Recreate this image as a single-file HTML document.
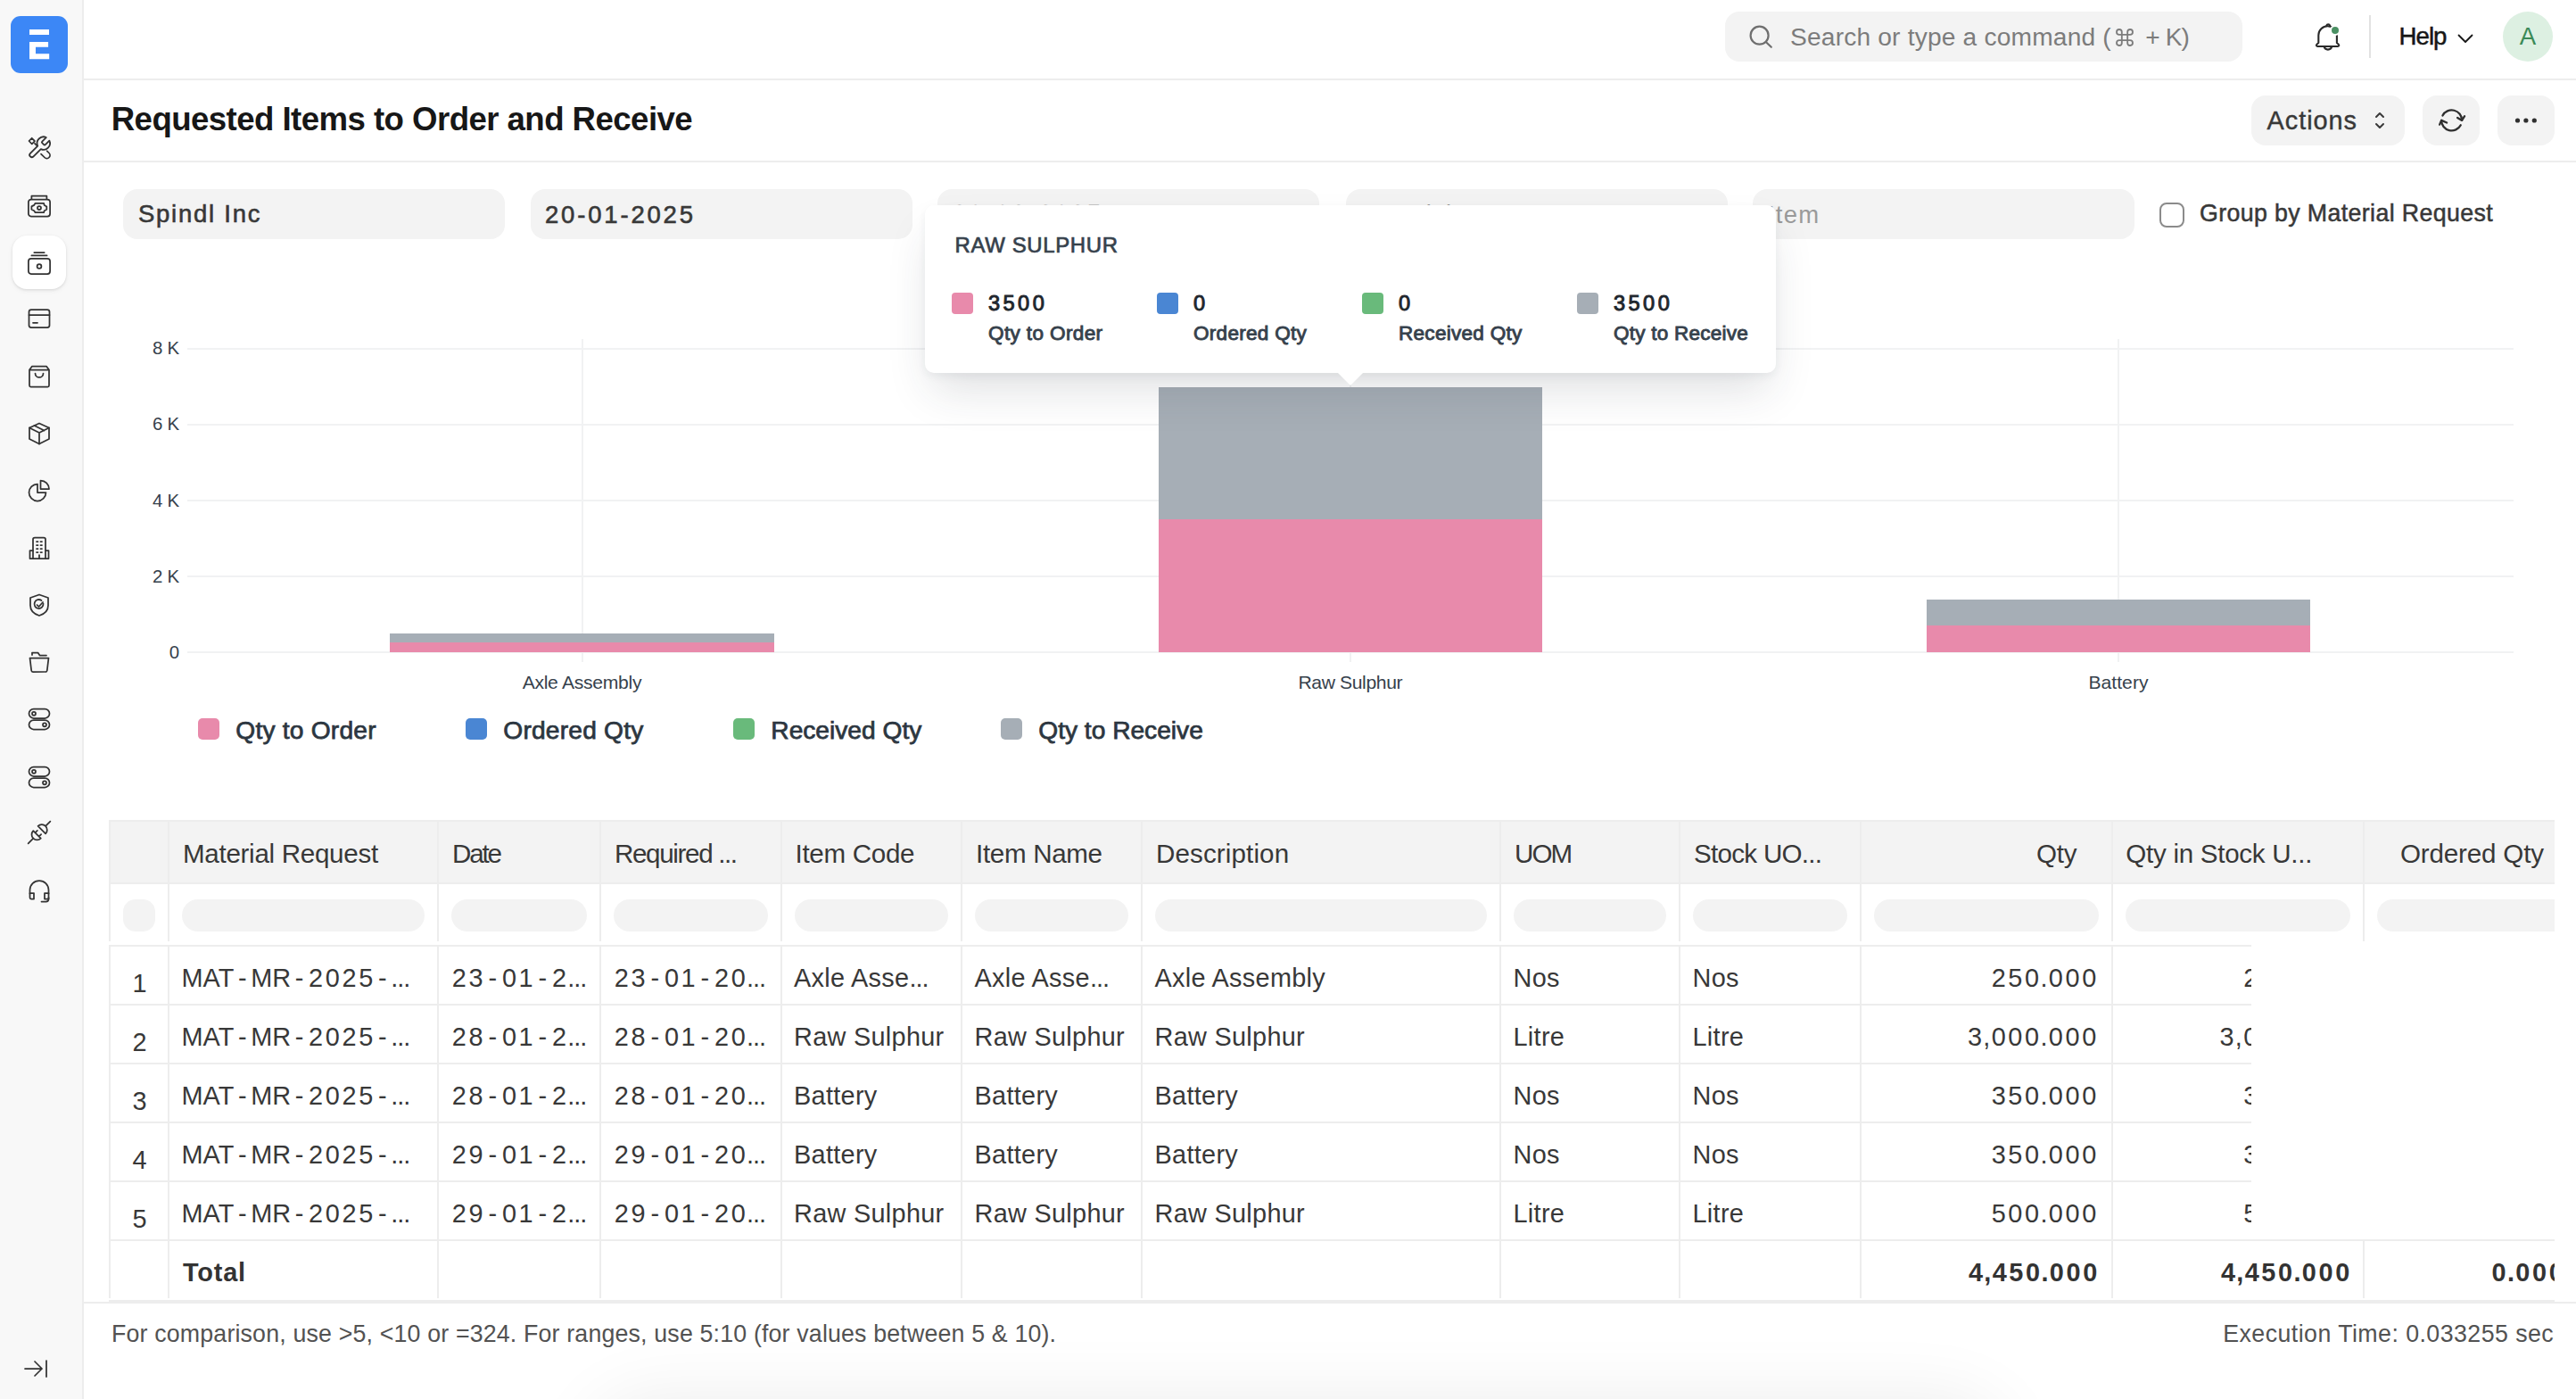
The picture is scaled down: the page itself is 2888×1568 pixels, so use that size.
<!DOCTYPE html>
<html><head><meta charset="utf-8">
<style>

*{box-sizing:border-box;margin:0;padding:0}
html,body{width:2888px;height:1568px;overflow:hidden;background:#fff}
body{position:relative;font-family:"Liberation Sans",sans-serif;color:#171717}
.a{position:absolute}
.t{position:absolute;white-space:nowrap;line-height:1}
svg{position:absolute;overflow:visible}
.ic{fill:none;stroke:#333;stroke-width:1.75;stroke-linecap:round;stroke-linejoin:round}
.bx{position:absolute;background:#f3f3f3}
.bd{position:absolute;background:#ededed}

</style></head><body>
<div class="a" style="left:700px;top:1605px;width:1510px;height:60px;border-radius:30px;box-shadow:0 0 80px 40px rgba(0,0,0,0.07)"></div>
<div class="a" style="left:0;top:0;width:92px;height:1568px;background:#f8f8f8"></div>
<div class="bd" style="left:92px;top:0;width:2px;height:1568px"></div>
<div class="a" style="left:12px;top:18px;width:64px;height:64px;border-radius:11px;background:#3c87f6"></div>
<div class="a" style="left:33px;top:33px;width:22px;height:6px;background:#fff"></div>
<svg style="left:33px;top:46.8px" width="22.2" height="19.3" viewBox="0 0 22.2 19.3"><path d="M0 0H21.1V5.7H7V13.2H22.2V19.3H0z" fill="#fff"/></svg>
<div class="a" style="left:14px;top:264px;width:60px;height:60px;border-radius:16px;background:#fff;box-shadow:0 1px 3px rgba(0,0,0,0.10),0 2px 6px rgba(0,0,0,0.05)"></div>
<svg class="ic" style="left:31px;top:153.0px" width="26" height="26" viewBox="0 0 26 26"><g transform="translate(-1.4 -2) scale(1.2)" style="stroke-width:1.5"><path d="M14.7 6.3a1 1 0 0 0 0 1.4l1.6 1.6a1 1 0 0 0 1.4 0l3.77-3.77a6 6 0 0 1-7.94 7.94l-6.91 6.91a2.12 2.12 0 0 1-3-3l6.91-6.91a6 6 0 0 1 7.94-7.94l-3.76 3.76z"/></g><path d="M1.5 5L4.7 1.8L8 5.2L4.8 8.3Z M8 7.8L10.3 10"/><path d="M21.8 16.3L24 18.5a3.5 3.5 0 0 1-5 5L15 19.6"/></svg>
<svg class="ic" style="left:31px;top:217.5px" width="26" height="26" viewBox="0 0 26 26"><rect x="0.9" y="5.6" width="24.2" height="18.9" rx="3"/><path d="M4.4 5V1.7h17V5"/><path d="M8.4 9.8h9.7l0.6 2.1 2.6 1.5v3.4l-2.6 1.4-0.6 2H8.4l-1.1-2-2.9-1.4v-3.4l2.9-1.5z"/><circle cx="13" cy="15.1" r="2"/></svg>
<svg class="ic" style="left:31px;top:281.5px" width="26" height="26" viewBox="0 0 26 26"><rect x="0.9" y="7.9" width="24.2" height="17.2" rx="3"/><path d="M7.3 1h11.4 M4.4 4.4h17.2"/><circle cx="13" cy="16.5" r="2.4"/></svg>
<svg class="ic" style="left:31px;top:344.7px" width="26" height="26" viewBox="0 0 26 26"><rect x="1.5" y="2" width="23" height="20" rx="2.5"/><path d="M1.5 8h23 M6 16.8h5"/></svg>
<svg class="ic" style="left:31px;top:408.7px" width="26" height="26" viewBox="0 0 26 26"><path d="M2 5.5L5 1.5h16l3 4V23a1.5 1.5 0 0 1-1.5 1.5h-19A1.5 1.5 0 0 1 2 23z M2 5.5h22"/><path d="M8.5 9.5a4.5 4.5 0 0 0 9 0"/></svg>
<svg class="ic" style="left:31px;top:472.7px" width="26" height="26" viewBox="0 0 26 26"><path d="M13 1.5L2 6.5v12.5l11 5.5 11-5.5V6.5z"/><path d="M2 6.5l11 5.5 11-5.5 M13 12v12.5 M7.5 4l11 5.5"/></svg>
<svg class="ic" style="left:31px;top:537.0px" width="26" height="26" viewBox="0 0 26 26"><path d="M11 5.5a9.5 9.5 0 1 0 9.5 9.5H11z"/><path d="M14.5 1.5a9.5 9.5 0 0 1 9.5 9.5h-9.5z"/></svg>
<svg class="ic" style="left:31px;top:601.0px" width="26" height="26" viewBox="0 0 26 26"><path d="M6 25V3.5A2 2 0 0 1 8 1.5h10a2 2 0 0 1 2 2V25"/><path d="M6 16H2.5v9H23.5v-9H20 M13 21v4"/><path d="M10 6h1.5 M14.5 6H16 M10 10h1.5 M14.5 10H16 M10 14h1.5 M14.5 14H16 M10 18h1.5 M14.5 18H16"/></svg>
<svg class="ic" style="left:31px;top:665.0px" width="26" height="26" viewBox="0 0 26 26"><path d="M13 1.5l10 3.5v8.5c0 6-4.5 9.8-10 11.5C7.5 23.3 3 19.5 3 13.5V5z"/><path d="M17.5 11.5a5 5 0 1 1-2-3.5"/><path d="M10.5 13l2 2 4.5-5"/></svg>
<svg class="ic" style="left:31px;top:729.0px" width="26" height="26" viewBox="0 0 26 26"><path d="M5 5V2.5h6.5l2 3h7.5"/><path d="M2.5 8.5h21l-1.7 14a1.7 1.7 0 0 1-1.7 1.5H5.9a1.7 1.7 0 0 1-1.7-1.5z"/></svg>
<svg class="ic" style="left:31px;top:793.3px" width="26" height="26" viewBox="0 0 26 26"><rect x="1.5" y="1.5" width="23" height="10.5" rx="5.25"/><rect x="1.5" y="14" width="23" height="10.5" rx="5.25"/><circle cx="7" cy="6.75" r="2"/><circle cx="19" cy="19.25" r="2"/></svg>
<svg class="ic" style="left:31px;top:857.8px" width="26" height="26" viewBox="0 0 26 26"><rect x="1.5" y="1.5" width="23" height="10.5" rx="5.25"/><rect x="1.5" y="14" width="23" height="10.5" rx="5.25"/><circle cx="7" cy="6.75" r="2"/><circle cx="19" cy="19.25" r="2"/></svg>
<svg class="ic" style="left:31px;top:920.0px" width="26" height="26" viewBox="0 0 26 26"><g transform="rotate(-45 13 13)"><path d="M-4.5 13h8"/><path d="M9.5 7a6 6 0 0 0 0 12z M9.5 10h3.5 M9.5 16h3.5"/><path d="M17 7a6 6 0 0 1 0 12z M23 13h7.5"/></g></svg>
<svg class="ic" style="left:31px;top:985.0px" width="26" height="26" viewBox="0 0 26 26"><path d="M2.5 16.5v-4a10.5 10.5 0 0 1 21 0v4"/><path d="M2.5 16h4.5v6.5H4a1.5 1.5 0 0 1-1.5-1.5z M23.5 16H19v6.5h4.5z"/><path d="M23.5 21v1.5a3 3 0 0 1-3 3h-5"/></svg>
<svg class="ic" style="left:28px;top:1525px" width="26" height="20" viewBox="0 0 26 20"><path d="M0 9h19 M11 1l8 8-8 8 M24 0v18"/></svg>
<div class="bd" style="left:94px;top:88px;width:2794px;height:2px"></div>
<div class="bx" style="left:1934px;top:13px;width:580px;height:56px;border-radius:16px"></div>
<svg class="ic" style="left:1960px;top:27px;stroke:#6f6f6f;stroke-width:2.2" width="28" height="28" viewBox="0 0 28 28"><circle cx="12.6" cy="12.7" r="10"/><path d="M20 20.2l5.8 5.6"/></svg>
<div class="t" style="top:27.15px;font-size:28.17px;font-weight:normal;color:#7c7c7c;letter-spacing:0.178px;left:2007.00px;">Search or type a command (</div>
<svg style="left:2372px;top:32px" width="20" height="20" viewBox="0 0 22 22"><path d="M7.5 7.5V4.2a3.2 3.2 0 1 0-3.2 3.3H17.7a3.2 3.2 0 1 0-3.2-3.3V17.8a3.2 3.2 0 1 0 3.2-3.3H4.3a3.2 3.2 0 1 0 3.2 3.3z" fill="none" stroke="#7c7c7c" stroke-width="2"/></svg>
<div class="t" style="top:27.15px;font-size:28.17px;font-weight:normal;color:#7c7c7c;letter-spacing:-0.907px;left:2405.30px;">+ K)</div>
<svg class="ic" style="left:2590px;top:20px;stroke:#2a2a2a;stroke-width:2.1" width="40" height="40" viewBox="0 0 40 40"><path d="M9.3 28V19.5A10.3 10.3 0 0 1 29.9 19.5V28l1.9 1.7a1.3 1.3 0 0 1-0.9 2.3H8.3a1.3 1.3 0 0 1-0.9-2.3z"/><path d="M15.6 32.3a4.4 4.2 0 0 0 8.6 0"/><path d="M18.3 8.6a2 2 0 0 1 3.8 0"/></svg>
<div class="a" style="left:2611.5px;top:27.5px;width:12.8px;height:12.8px;border-radius:7px;background:#fff"></div>
<div class="a" style="left:2614px;top:30px;width:7.8px;height:7.8px;border-radius:4px;background:#4a9063"></div>
<div class="a" style="left:2656px;top:17px;width:2px;height:48px;background:#e2e2e2"></div>
<div class="t" style="top:27.03px;font-size:27.61px;font-weight:normal;color:#171717;letter-spacing:-0.983px;left:2689.60px;-webkit-text-stroke:0.5px #171717;">Help</div>
<svg class="ic" style="left:2755px;top:37px;stroke:#171717;stroke-width:1.8" width="18" height="14" viewBox="0 0 18 14"><path d="M1.5 2.5l7.5 7.5 7.5-7.5"/></svg>
<div class="a" style="left:2806px;top:13px;width:56px;height:56px;border-radius:28px;background:#ddf0e2"></div>
<div class="t" style="top:27.03px;font-size:27.61px;font-weight:normal;color:#3b8a57;left:2834.00px;transform:translateX(-50%);">A</div>
<div class="bd" style="left:94px;top:180px;width:2794px;height:2px"></div>
<div class="t" style="top:116.00px;font-size:36.62px;font-weight:bold;color:#171717;letter-spacing:-0.554px;left:124.70px;">Requested Items to Order and Receive</div>
<div class="bx" style="left:2524px;top:107px;width:172px;height:56px;border-radius:16px"></div>
<div class="t" style="top:120.56px;font-size:28.87px;font-weight:normal;color:#383838;letter-spacing:0.960px;left:2541.60px;-webkit-text-stroke:0.4px #383838;">Actions</div>
<svg class="ic" style="left:2662px;top:125px;stroke:#383838;stroke-width:2" width="12" height="20" viewBox="0 0 12 20"><path d="M2 6l4-4 4 4 M2 14l4 4 4-4"/></svg>
<div class="bx" style="left:2716px;top:107px;width:64px;height:56px;border-radius:16px"></div>
<svg class="ic" style="left:2728px;top:114px;stroke:#2f2f2f;stroke-width:2.3" width="42" height="42" viewBox="0 0 42 42"><path d="M10.45 15.5A11.5 11.5 0 0 1 32.1 20.9"/><path d="M35.1 16.2L32.1 20.9L27.1 17.9"/><path d="M30.75 26.3A11.5 11.5 0 0 1 9.1 20.9"/><path d="M7.1 25.6L9.1 20.9L15.1 23.5"/></svg>
<div class="bx" style="left:2800px;top:107px;width:64px;height:56px;border-radius:16px"></div>
<svg style="left:2810px;top:125px" width="44" height="20" viewBox="0 0 44 20"><circle cx="12.5" cy="10" r="2.6" fill="#2f2f2f"/><circle cx="21.9" cy="10" r="2.6" fill="#2f2f2f"/><circle cx="31.3" cy="10" r="2.6" fill="#2f2f2f"/></svg>
<div class="bx" style="left:138px;top:212px;width:428px;height:56px;border-radius:16px"></div>
<div class="bx" style="left:595px;top:212px;width:428px;height:56px;border-radius:16px"></div>
<div class="bx" style="left:1051px;top:212px;width:428px;height:56px;border-radius:16px"></div>
<div class="bx" style="left:1509px;top:212px;width:428px;height:56px;border-radius:16px"></div>
<div class="bx" style="left:1965px;top:212px;width:428px;height:56px;border-radius:16px"></div>
<div class="t" style="top:226.25px;font-size:27.46px;font-weight:normal;color:#383838;letter-spacing:1.771px;left:155.00px;-webkit-text-stroke:0.6px #383838;">Spindl Inc</div>
<div class="t" style="top:226.75px;font-size:27.46px;font-weight:normal;color:#383838;letter-spacing:2.841px;left:611.00px;-webkit-text-stroke:0.6px #383838;">20-01-2025</div>
<div class="t" style="top:226.35px;font-size:27.46px;font-weight:normal;color:#383838;letter-spacing:2.841px;left:1068.00px;-webkit-text-stroke:0.6px #383838;">20-02-2025</div>
<div class="t" style="top:226.35px;font-size:27.46px;font-weight:normal;color:#9a9a9a;letter-spacing:0.499px;left:1526.00px;">Material Request</div>
<div class="t" style="top:226.75px;font-size:27.46px;font-weight:normal;color:#9a9a9a;letter-spacing:1.203px;left:1982.00px;">Item</div>
<div class="a" style="left:2421px;top:226.5px;width:28px;height:28px;border-radius:8px;border:2px solid #8b8b8b;background:#fff"></div>
<div class="t" style="top:226.35px;font-size:26.76px;font-weight:normal;color:#383838;letter-spacing:0.376px;left:2466.00px;-webkit-text-stroke:0.5px #383838;">Group by Material Request</div>
<div class="a" style="left:210px;top:389.5px;width:2608px;height:2px;background:#f1f2f3"></div>
<div class="a" style="left:210px;top:474.5px;width:2608px;height:2px;background:#f1f2f3"></div>
<div class="a" style="left:210px;top:560.0px;width:2608px;height:2px;background:#f1f2f3"></div>
<div class="a" style="left:210px;top:645.0px;width:2608px;height:2px;background:#f1f2f3"></div>
<div class="a" style="left:210px;top:730.0px;width:2608px;height:2px;background:#f1f2f3"></div>
<div class="a" style="left:651.6px;top:380px;width:2px;height:362px;background:#f1f2f3"></div>
<div class="a" style="left:1513.0px;top:380px;width:2px;height:362px;background:#f1f2f3"></div>
<div class="a" style="left:2374.0px;top:380px;width:2px;height:362px;background:#f1f2f3"></div>
<div class="t" style="top:380.21px;font-size:20.42px;font-weight:normal;color:#36414c;letter-spacing:-0.315px;left:200.69px;transform:translateX(-100%);">8 K</div>
<div class="t" style="top:465.21px;font-size:20.42px;font-weight:normal;color:#36414c;letter-spacing:-0.315px;left:200.69px;transform:translateX(-100%);">6 K</div>
<div class="t" style="top:550.71px;font-size:20.42px;font-weight:normal;color:#36414c;letter-spacing:-0.315px;left:200.69px;transform:translateX(-100%);">4 K</div>
<div class="t" style="top:635.71px;font-size:20.42px;font-weight:normal;color:#36414c;letter-spacing:-0.315px;left:200.69px;transform:translateX(-100%);">2 K</div>
<div class="t" style="top:720.71px;font-size:20.42px;font-weight:normal;color:#36414c;left:201.00px;transform:translateX(-100%);">0</div>
<div class="a" style="left:437.35px;top:720.38px;width:430.5px;height:10.62px;background:#e88aab"></div>
<div class="a" style="left:437.35px;top:709.75px;width:430.5px;height:10.62px;background:#a6aeb6"></div>
<div class="a" style="left:1298.75px;top:582.25px;width:430.5px;height:148.75px;background:#e88aab"></div>
<div class="a" style="left:1298.75px;top:433.50px;width:430.5px;height:148.75px;background:#a6aeb6"></div>
<div class="a" style="left:2159.75px;top:701.25px;width:430.5px;height:29.75px;background:#e88aab"></div>
<div class="a" style="left:2159.75px;top:671.50px;width:430.5px;height:29.75px;background:#a6aeb6"></div>
<div class="t" style="top:753.92px;font-size:21.13px;font-weight:normal;color:#36414c;letter-spacing:-0.286px;left:652.46px;transform:translateX(-50%);">Axle Assembly</div>
<div class="t" style="top:753.92px;font-size:21.13px;font-weight:normal;color:#36414c;letter-spacing:-0.385px;left:1513.81px;transform:translateX(-50%);">Raw Sulphur</div>
<div class="t" style="top:753.92px;font-size:21.13px;font-weight:normal;color:#36414c;letter-spacing:0.021px;left:2375.01px;transform:translateX(-50%);">Battery</div>
<div class="a" style="left:222px;top:805px;width:24px;height:24px;border-radius:5px;background:#e88aab"></div>
<div class="t" style="top:803.65px;font-size:28.17px;font-weight:normal;color:#2c3640;letter-spacing:0.218px;left:264.30px;-webkit-text-stroke:0.75px #2c3640;">Qty to Order</div>
<div class="a" style="left:522px;top:805px;width:24px;height:24px;border-radius:5px;background:#4a86d3"></div>
<div class="t" style="top:803.65px;font-size:28.17px;font-weight:normal;color:#2c3640;letter-spacing:0.209px;left:564.30px;-webkit-text-stroke:0.75px #2c3640;">Ordered Qty</div>
<div class="a" style="left:822px;top:805px;width:24px;height:24px;border-radius:5px;background:#69ba7b"></div>
<div class="t" style="top:803.65px;font-size:28.17px;font-weight:normal;color:#2c3640;letter-spacing:-0.001px;left:864.30px;-webkit-text-stroke:0.75px #2c3640;">Received Qty</div>
<div class="a" style="left:1122px;top:805px;width:24px;height:24px;border-radius:5px;background:#a6aeb6"></div>
<div class="t" style="top:803.65px;font-size:28.17px;font-weight:normal;color:#2c3640;letter-spacing:-0.012px;left:1164.30px;-webkit-text-stroke:0.75px #2c3640;">Qty to Receive</div>
<div class="a" style="left:1037px;top:230px;width:954px;height:188px;border-radius:10px;background:#fff;box-shadow:0 26px 50px -8px rgba(40,50,60,0.15),0 4px 10px rgba(40,50,60,0.06)"></div>
<svg style="left:1499px;top:417px" width="30" height="15" viewBox="0 0 30 15"><path d="M0 0L15 15L30 0z" fill="#fff"/></svg>
<div class="t" style="top:262.73px;font-size:23.94px;font-weight:normal;color:#36414c;letter-spacing:0.650px;left:1070.50px;-webkit-text-stroke:0.7px #36414c;">RAW SULPHUR</div>
<div class="a" style="left:1067px;top:328px;width:24px;height:24px;border-radius:4px;background:#e88aab"></div>
<div class="t" style="top:328.78px;font-size:23.59px;font-weight:normal;color:#1f272e;letter-spacing:3.433px;left:1108.00px;-webkit-text-stroke:1px #1f272e;">3500</div>
<div class="t" style="top:362.67px;font-size:22.54px;font-weight:normal;color:#36414c;letter-spacing:0.376px;left:1108.00px;-webkit-text-stroke:0.9px #36414c;">Qty to Order</div>
<div class="a" style="left:1297px;top:328px;width:24px;height:24px;border-radius:4px;background:#4a86d3"></div>
<div class="t" style="top:328.78px;font-size:23.59px;font-weight:normal;color:#1f272e;left:1338.00px;-webkit-text-stroke:1px #1f272e;">0</div>
<div class="t" style="top:362.67px;font-size:22.54px;font-weight:normal;color:#36414c;letter-spacing:0.287px;left:1338.00px;-webkit-text-stroke:0.9px #36414c;">Ordered Qty</div>
<div class="a" style="left:1527px;top:328px;width:24px;height:24px;border-radius:4px;background:#69ba7b"></div>
<div class="t" style="top:328.78px;font-size:23.59px;font-weight:normal;color:#1f272e;left:1568.00px;-webkit-text-stroke:1px #1f272e;">0</div>
<div class="t" style="top:362.67px;font-size:22.54px;font-weight:normal;color:#36414c;letter-spacing:0.282px;left:1568.00px;-webkit-text-stroke:0.9px #36414c;">Received Qty</div>
<div class="a" style="left:1768px;top:328px;width:24px;height:24px;border-radius:4px;background:#a6aeb6"></div>
<div class="t" style="top:328.78px;font-size:23.59px;font-weight:normal;color:#1f272e;letter-spacing:3.433px;left:1809.00px;-webkit-text-stroke:1px #1f272e;">3500</div>
<div class="t" style="top:362.67px;font-size:22.54px;font-weight:normal;color:#36414c;letter-spacing:0.238px;left:1809.00px;-webkit-text-stroke:0.9px #36414c;">Qty to Receive</div>
<div class="a" style="left:122px;top:919px;width:2742px;height:70px;background:#f3f3f3"></div>
<div class="bd" style="left:122px;top:919px;width:2742px;height:2px"></div>
<div class="bd" style="left:122px;top:988.5px;width:2742px;height:2px"></div>
<div class="a" style="left:122px;top:919px;width:2px;height:136px;background:#ededed"></div>
<div class="a" style="left:188px;top:919px;width:2px;height:136px;background:#ededed"></div>
<div class="a" style="left:490px;top:919px;width:2px;height:136px;background:#ededed"></div>
<div class="a" style="left:672px;top:919px;width:2px;height:136px;background:#ededed"></div>
<div class="a" style="left:874.5px;top:919px;width:2px;height:136px;background:#ededed"></div>
<div class="a" style="left:1077px;top:919px;width:2px;height:136px;background:#ededed"></div>
<div class="a" style="left:1279px;top:919px;width:2px;height:136px;background:#ededed"></div>
<div class="a" style="left:1681px;top:919px;width:2px;height:136px;background:#ededed"></div>
<div class="a" style="left:1882px;top:919px;width:2px;height:136px;background:#ededed"></div>
<div class="a" style="left:2084.5px;top:919px;width:2px;height:136px;background:#ededed"></div>
<div class="a" style="left:2366.5px;top:919px;width:2px;height:136px;background:#ededed"></div>
<div class="a" style="left:2649px;top:919px;width:2px;height:136px;background:#ededed"></div>
<div class="t" style="top:941.96px;font-size:29.58px;font-weight:normal;color:#383838;letter-spacing:-0.298px;left:205.00px;">Material Request</div>
<div class="t" style="top:941.96px;font-size:29.58px;font-weight:normal;color:#383838;letter-spacing:-2.148px;left:507.00px;">Date</div>
<div class="t" style="top:941.96px;font-size:29.58px;font-weight:normal;color:#383838;letter-spacing:-1.347px;left:689.00px;">Required ...</div>
<div class="t" style="top:941.96px;font-size:29.58px;font-weight:normal;color:#383838;letter-spacing:-0.298px;left:891.50px;">Item Code</div>
<div class="t" style="top:941.96px;font-size:29.58px;font-weight:normal;color:#383838;letter-spacing:-0.321px;left:1094.00px;">Item Name</div>
<div class="t" style="top:941.96px;font-size:29.58px;font-weight:normal;color:#383838;letter-spacing:0.113px;left:1296.00px;">Description</div>
<div class="t" style="top:941.96px;font-size:29.58px;font-weight:normal;color:#383838;letter-spacing:-1.985px;left:1698.00px;">UOM</div>
<div class="t" style="top:941.96px;font-size:29.58px;font-weight:normal;color:#383838;letter-spacing:-0.713px;left:1899.00px;">Stock UO...</div>
<div class="t" style="top:941.96px;font-size:29.58px;font-weight:normal;color:#383838;letter-spacing:-0.245px;left:2328.26px;transform:translateX(-100%);">Qty</div>
<div class="t" style="top:941.96px;font-size:29.58px;font-weight:normal;color:#383838;letter-spacing:-0.285px;left:2383.30px;">Qty in Stock U...</div>
<div class="t" style="top:941.96px;font-size:29.58px;font-weight:normal;color:#383838;letter-spacing:-0.165px;left:2851.83px;transform:translateX(-100%);">Ordered Qty</div>
<div class="a" style="left:138px;top:1008px;width:36px;height:36px;border-radius:14px;background:#f3f3f3"></div>
<div class="a" style="left:204px;top:1008px;width:272px;height:36px;border-radius:18px;background:#f3f3f3"></div>
<div class="a" style="left:506px;top:1008px;width:152px;height:36px;border-radius:18px;background:#f3f3f3"></div>
<div class="a" style="left:688px;top:1008px;width:172.5px;height:36px;border-radius:18px;background:#f3f3f3"></div>
<div class="a" style="left:890.5px;top:1008px;width:172.5px;height:36px;border-radius:18px;background:#f3f3f3"></div>
<div class="a" style="left:1093px;top:1008px;width:172px;height:36px;border-radius:18px;background:#f3f3f3"></div>
<div class="a" style="left:1295px;top:1008px;width:372px;height:36px;border-radius:18px;background:#f3f3f3"></div>
<div class="a" style="left:1697px;top:1008px;width:171px;height:36px;border-radius:18px;background:#f3f3f3"></div>
<div class="a" style="left:1898px;top:1008px;width:172.5px;height:36px;border-radius:18px;background:#f3f3f3"></div>
<div class="a" style="left:2100.5px;top:1008px;width:252.0px;height:36px;border-radius:18px;background:#f3f3f3"></div>
<div class="a" style="left:2382.5px;top:1008px;width:252.5px;height:36px;border-radius:18px;background:#f3f3f3"></div>
<div class="a" style="left:2665px;top:1008px;width:199px;height:36px;border-radius:18px;background:#f3f3f3;border-top-right-radius:0;border-bottom-right-radius:0"></div>
<div class="a" style="left:122px;top:1059px;width:2402px;height:330px;overflow:hidden">
<div class="bd" style="left:0;top:0px;width:2742px;height:2px"></div>
<div class="bd" style="left:0;top:66px;width:2742px;height:2px"></div>
<div class="bd" style="left:0;top:132px;width:2742px;height:2px"></div>
<div class="bd" style="left:0;top:198px;width:2742px;height:2px"></div>
<div class="bd" style="left:0;top:264px;width:2742px;height:2px"></div>
<div class="bd" style="left:0px;top:0;width:2px;height:330px"></div>
<div class="bd" style="left:66px;top:0;width:2px;height:330px"></div>
<div class="bd" style="left:368px;top:0;width:2px;height:330px"></div>
<div class="bd" style="left:550px;top:0;width:2px;height:330px"></div>
<div class="bd" style="left:752.5px;top:0;width:2px;height:330px"></div>
<div class="bd" style="left:955px;top:0;width:2px;height:330px"></div>
<div class="bd" style="left:1157px;top:0;width:2px;height:330px"></div>
<div class="bd" style="left:1559px;top:0;width:2px;height:330px"></div>
<div class="bd" style="left:1760px;top:0;width:2px;height:330px"></div>
<div class="bd" style="left:1962.5px;top:0;width:2px;height:330px"></div>
<div class="bd" style="left:2244.5px;top:0;width:2px;height:330px"></div>
<div class="bd" style="left:2527px;top:0;width:2px;height:330px"></div>
</div>
<div class="a" style="left:0;top:0;width:2524px;height:1568px;overflow:hidden">
<div class="t" style="top:1087.56px;font-size:28.87px;font-weight:normal;color:#383838;left:148.50px;">1</div>
<div class="t" style="top:1081.56px;font-size:28.87px;font-weight:normal;color:#383838;letter-spacing:0.050px;left:203.50px;">MAT<span style="display:inline-block;width:18.7px;text-align:center;letter-spacing:0">-</span>MR<span style="display:inline-block;width:18.7px;text-align:center;letter-spacing:0">-</span><span style="display:inline-block;width:18.7px;text-align:center;letter-spacing:0">2</span><span style="display:inline-block;width:18.7px;text-align:center;letter-spacing:0">0</span><span style="display:inline-block;width:18.7px;text-align:center;letter-spacing:0">2</span><span style="display:inline-block;width:18.7px;text-align:center;letter-spacing:0">5</span><span style="display:inline-block;width:18.7px;text-align:center;letter-spacing:0">-</span><span style="letter-spacing:-1px">...</span></div>
<div class="t" style="top:1081.56px;font-size:28.87px;font-weight:normal;color:#383838;letter-spacing:0.300px;left:505.50px;"><span style="display:inline-block;width:18.7px;text-align:center;letter-spacing:0">2</span><span style="display:inline-block;width:18.7px;text-align:center;letter-spacing:0">3</span><span style="display:inline-block;width:18.7px;text-align:center;letter-spacing:0">-</span><span style="display:inline-block;width:18.7px;text-align:center;letter-spacing:0">0</span><span style="display:inline-block;width:18.7px;text-align:center;letter-spacing:0">1</span><span style="display:inline-block;width:18.7px;text-align:center;letter-spacing:0">-</span><span style="display:inline-block;width:18.7px;text-align:center;letter-spacing:0">2</span><span style="letter-spacing:-1px">...</span></div>
<div class="t" style="top:1081.56px;font-size:28.87px;font-weight:normal;color:#383838;letter-spacing:0.300px;left:687.50px;"><span style="display:inline-block;width:18.7px;text-align:center;letter-spacing:0">2</span><span style="display:inline-block;width:18.7px;text-align:center;letter-spacing:0">3</span><span style="display:inline-block;width:18.7px;text-align:center;letter-spacing:0">-</span><span style="display:inline-block;width:18.7px;text-align:center;letter-spacing:0">0</span><span style="display:inline-block;width:18.7px;text-align:center;letter-spacing:0">1</span><span style="display:inline-block;width:18.7px;text-align:center;letter-spacing:0">-</span><span style="display:inline-block;width:18.7px;text-align:center;letter-spacing:0">2</span><span style="display:inline-block;width:18.7px;text-align:center;letter-spacing:0">0</span><span style="letter-spacing:-1px">...</span></div>
<div class="t" style="top:1081.56px;font-size:28.87px;font-weight:normal;color:#383838;letter-spacing:0.300px;left:890.00px;">Axle Asse<span style="letter-spacing:-1px">...</span></div>
<div class="t" style="top:1081.56px;font-size:28.87px;font-weight:normal;color:#383838;letter-spacing:0.300px;left:1092.50px;">Axle Asse<span style="letter-spacing:-1px">...</span></div>
<div class="t" style="top:1081.56px;font-size:28.87px;font-weight:normal;color:#383838;letter-spacing:0.300px;left:1294.50px;">Axle Assembly</div>
<div class="t" style="top:1081.56px;font-size:28.87px;font-weight:normal;color:#383838;letter-spacing:0.300px;left:1696.50px;">Nos</div>
<div class="t" style="top:1081.56px;font-size:28.87px;font-weight:normal;color:#383838;letter-spacing:0.300px;left:1897.50px;">Nos</div>
<div class="t" style="top:1081.56px;font-size:28.87px;font-weight:normal;color:#383838;letter-spacing:0.010px;left:2351.51px;transform:translateX(-100%);"><span style="display:inline-block;width:18.7px;text-align:center;letter-spacing:0">2</span><span style="display:inline-block;width:18.7px;text-align:center;letter-spacing:0">5</span><span style="display:inline-block;width:18.7px;text-align:center;letter-spacing:0">0</span>.<span style="display:inline-block;width:18.7px;text-align:center;letter-spacing:0">0</span><span style="display:inline-block;width:18.7px;text-align:center;letter-spacing:0">0</span><span style="display:inline-block;width:18.7px;text-align:center;letter-spacing:0">0</span></div>
<div class="t" style="top:1153.56px;font-size:28.87px;font-weight:normal;color:#383838;left:148.50px;">2</div>
<div class="t" style="top:1147.56px;font-size:28.87px;font-weight:normal;color:#383838;letter-spacing:0.050px;left:203.50px;">MAT<span style="display:inline-block;width:18.7px;text-align:center;letter-spacing:0">-</span>MR<span style="display:inline-block;width:18.7px;text-align:center;letter-spacing:0">-</span><span style="display:inline-block;width:18.7px;text-align:center;letter-spacing:0">2</span><span style="display:inline-block;width:18.7px;text-align:center;letter-spacing:0">0</span><span style="display:inline-block;width:18.7px;text-align:center;letter-spacing:0">2</span><span style="display:inline-block;width:18.7px;text-align:center;letter-spacing:0">5</span><span style="display:inline-block;width:18.7px;text-align:center;letter-spacing:0">-</span><span style="letter-spacing:-1px">...</span></div>
<div class="t" style="top:1147.56px;font-size:28.87px;font-weight:normal;color:#383838;letter-spacing:0.300px;left:505.50px;"><span style="display:inline-block;width:18.7px;text-align:center;letter-spacing:0">2</span><span style="display:inline-block;width:18.7px;text-align:center;letter-spacing:0">8</span><span style="display:inline-block;width:18.7px;text-align:center;letter-spacing:0">-</span><span style="display:inline-block;width:18.7px;text-align:center;letter-spacing:0">0</span><span style="display:inline-block;width:18.7px;text-align:center;letter-spacing:0">1</span><span style="display:inline-block;width:18.7px;text-align:center;letter-spacing:0">-</span><span style="display:inline-block;width:18.7px;text-align:center;letter-spacing:0">2</span><span style="letter-spacing:-1px">...</span></div>
<div class="t" style="top:1147.56px;font-size:28.87px;font-weight:normal;color:#383838;letter-spacing:0.300px;left:687.50px;"><span style="display:inline-block;width:18.7px;text-align:center;letter-spacing:0">2</span><span style="display:inline-block;width:18.7px;text-align:center;letter-spacing:0">8</span><span style="display:inline-block;width:18.7px;text-align:center;letter-spacing:0">-</span><span style="display:inline-block;width:18.7px;text-align:center;letter-spacing:0">0</span><span style="display:inline-block;width:18.7px;text-align:center;letter-spacing:0">1</span><span style="display:inline-block;width:18.7px;text-align:center;letter-spacing:0">-</span><span style="display:inline-block;width:18.7px;text-align:center;letter-spacing:0">2</span><span style="display:inline-block;width:18.7px;text-align:center;letter-spacing:0">0</span><span style="letter-spacing:-1px">...</span></div>
<div class="t" style="top:1147.56px;font-size:28.87px;font-weight:normal;color:#383838;letter-spacing:0.300px;left:890.00px;">Raw Sulphur</div>
<div class="t" style="top:1147.56px;font-size:28.87px;font-weight:normal;color:#383838;letter-spacing:0.300px;left:1092.50px;">Raw Sulphur</div>
<div class="t" style="top:1147.56px;font-size:28.87px;font-weight:normal;color:#383838;letter-spacing:0.300px;left:1294.50px;">Raw Sulphur</div>
<div class="t" style="top:1147.56px;font-size:28.87px;font-weight:normal;color:#383838;letter-spacing:0.300px;left:1696.50px;">Litre</div>
<div class="t" style="top:1147.56px;font-size:28.87px;font-weight:normal;color:#383838;letter-spacing:0.300px;left:1897.50px;">Litre</div>
<div class="t" style="top:1147.56px;font-size:28.87px;font-weight:normal;color:#383838;letter-spacing:0.010px;left:2351.51px;transform:translateX(-100%);"><span style="display:inline-block;width:18.7px;text-align:center;letter-spacing:0">3</span>,<span style="display:inline-block;width:18.7px;text-align:center;letter-spacing:0">0</span><span style="display:inline-block;width:18.7px;text-align:center;letter-spacing:0">0</span><span style="display:inline-block;width:18.7px;text-align:center;letter-spacing:0">0</span>.<span style="display:inline-block;width:18.7px;text-align:center;letter-spacing:0">0</span><span style="display:inline-block;width:18.7px;text-align:center;letter-spacing:0">0</span><span style="display:inline-block;width:18.7px;text-align:center;letter-spacing:0">0</span></div>
<div class="t" style="top:1219.56px;font-size:28.87px;font-weight:normal;color:#383838;left:148.50px;">3</div>
<div class="t" style="top:1213.56px;font-size:28.87px;font-weight:normal;color:#383838;letter-spacing:0.050px;left:203.50px;">MAT<span style="display:inline-block;width:18.7px;text-align:center;letter-spacing:0">-</span>MR<span style="display:inline-block;width:18.7px;text-align:center;letter-spacing:0">-</span><span style="display:inline-block;width:18.7px;text-align:center;letter-spacing:0">2</span><span style="display:inline-block;width:18.7px;text-align:center;letter-spacing:0">0</span><span style="display:inline-block;width:18.7px;text-align:center;letter-spacing:0">2</span><span style="display:inline-block;width:18.7px;text-align:center;letter-spacing:0">5</span><span style="display:inline-block;width:18.7px;text-align:center;letter-spacing:0">-</span><span style="letter-spacing:-1px">...</span></div>
<div class="t" style="top:1213.56px;font-size:28.87px;font-weight:normal;color:#383838;letter-spacing:0.300px;left:505.50px;"><span style="display:inline-block;width:18.7px;text-align:center;letter-spacing:0">2</span><span style="display:inline-block;width:18.7px;text-align:center;letter-spacing:0">8</span><span style="display:inline-block;width:18.7px;text-align:center;letter-spacing:0">-</span><span style="display:inline-block;width:18.7px;text-align:center;letter-spacing:0">0</span><span style="display:inline-block;width:18.7px;text-align:center;letter-spacing:0">1</span><span style="display:inline-block;width:18.7px;text-align:center;letter-spacing:0">-</span><span style="display:inline-block;width:18.7px;text-align:center;letter-spacing:0">2</span><span style="letter-spacing:-1px">...</span></div>
<div class="t" style="top:1213.56px;font-size:28.87px;font-weight:normal;color:#383838;letter-spacing:0.300px;left:687.50px;"><span style="display:inline-block;width:18.7px;text-align:center;letter-spacing:0">2</span><span style="display:inline-block;width:18.7px;text-align:center;letter-spacing:0">8</span><span style="display:inline-block;width:18.7px;text-align:center;letter-spacing:0">-</span><span style="display:inline-block;width:18.7px;text-align:center;letter-spacing:0">0</span><span style="display:inline-block;width:18.7px;text-align:center;letter-spacing:0">1</span><span style="display:inline-block;width:18.7px;text-align:center;letter-spacing:0">-</span><span style="display:inline-block;width:18.7px;text-align:center;letter-spacing:0">2</span><span style="display:inline-block;width:18.7px;text-align:center;letter-spacing:0">0</span><span style="letter-spacing:-1px">...</span></div>
<div class="t" style="top:1213.56px;font-size:28.87px;font-weight:normal;color:#383838;letter-spacing:0.300px;left:890.00px;">Battery</div>
<div class="t" style="top:1213.56px;font-size:28.87px;font-weight:normal;color:#383838;letter-spacing:0.300px;left:1092.50px;">Battery</div>
<div class="t" style="top:1213.56px;font-size:28.87px;font-weight:normal;color:#383838;letter-spacing:0.300px;left:1294.50px;">Battery</div>
<div class="t" style="top:1213.56px;font-size:28.87px;font-weight:normal;color:#383838;letter-spacing:0.300px;left:1696.50px;">Nos</div>
<div class="t" style="top:1213.56px;font-size:28.87px;font-weight:normal;color:#383838;letter-spacing:0.300px;left:1897.50px;">Nos</div>
<div class="t" style="top:1213.56px;font-size:28.87px;font-weight:normal;color:#383838;letter-spacing:0.010px;left:2351.51px;transform:translateX(-100%);"><span style="display:inline-block;width:18.7px;text-align:center;letter-spacing:0">3</span><span style="display:inline-block;width:18.7px;text-align:center;letter-spacing:0">5</span><span style="display:inline-block;width:18.7px;text-align:center;letter-spacing:0">0</span>.<span style="display:inline-block;width:18.7px;text-align:center;letter-spacing:0">0</span><span style="display:inline-block;width:18.7px;text-align:center;letter-spacing:0">0</span><span style="display:inline-block;width:18.7px;text-align:center;letter-spacing:0">0</span></div>
<div class="t" style="top:1285.56px;font-size:28.87px;font-weight:normal;color:#383838;left:148.50px;">4</div>
<div class="t" style="top:1279.56px;font-size:28.87px;font-weight:normal;color:#383838;letter-spacing:0.050px;left:203.50px;">MAT<span style="display:inline-block;width:18.7px;text-align:center;letter-spacing:0">-</span>MR<span style="display:inline-block;width:18.7px;text-align:center;letter-spacing:0">-</span><span style="display:inline-block;width:18.7px;text-align:center;letter-spacing:0">2</span><span style="display:inline-block;width:18.7px;text-align:center;letter-spacing:0">0</span><span style="display:inline-block;width:18.7px;text-align:center;letter-spacing:0">2</span><span style="display:inline-block;width:18.7px;text-align:center;letter-spacing:0">5</span><span style="display:inline-block;width:18.7px;text-align:center;letter-spacing:0">-</span><span style="letter-spacing:-1px">...</span></div>
<div class="t" style="top:1279.56px;font-size:28.87px;font-weight:normal;color:#383838;letter-spacing:0.300px;left:505.50px;"><span style="display:inline-block;width:18.7px;text-align:center;letter-spacing:0">2</span><span style="display:inline-block;width:18.7px;text-align:center;letter-spacing:0">9</span><span style="display:inline-block;width:18.7px;text-align:center;letter-spacing:0">-</span><span style="display:inline-block;width:18.7px;text-align:center;letter-spacing:0">0</span><span style="display:inline-block;width:18.7px;text-align:center;letter-spacing:0">1</span><span style="display:inline-block;width:18.7px;text-align:center;letter-spacing:0">-</span><span style="display:inline-block;width:18.7px;text-align:center;letter-spacing:0">2</span><span style="letter-spacing:-1px">...</span></div>
<div class="t" style="top:1279.56px;font-size:28.87px;font-weight:normal;color:#383838;letter-spacing:0.300px;left:687.50px;"><span style="display:inline-block;width:18.7px;text-align:center;letter-spacing:0">2</span><span style="display:inline-block;width:18.7px;text-align:center;letter-spacing:0">9</span><span style="display:inline-block;width:18.7px;text-align:center;letter-spacing:0">-</span><span style="display:inline-block;width:18.7px;text-align:center;letter-spacing:0">0</span><span style="display:inline-block;width:18.7px;text-align:center;letter-spacing:0">1</span><span style="display:inline-block;width:18.7px;text-align:center;letter-spacing:0">-</span><span style="display:inline-block;width:18.7px;text-align:center;letter-spacing:0">2</span><span style="display:inline-block;width:18.7px;text-align:center;letter-spacing:0">0</span><span style="letter-spacing:-1px">...</span></div>
<div class="t" style="top:1279.56px;font-size:28.87px;font-weight:normal;color:#383838;letter-spacing:0.300px;left:890.00px;">Battery</div>
<div class="t" style="top:1279.56px;font-size:28.87px;font-weight:normal;color:#383838;letter-spacing:0.300px;left:1092.50px;">Battery</div>
<div class="t" style="top:1279.56px;font-size:28.87px;font-weight:normal;color:#383838;letter-spacing:0.300px;left:1294.50px;">Battery</div>
<div class="t" style="top:1279.56px;font-size:28.87px;font-weight:normal;color:#383838;letter-spacing:0.300px;left:1696.50px;">Nos</div>
<div class="t" style="top:1279.56px;font-size:28.87px;font-weight:normal;color:#383838;letter-spacing:0.300px;left:1897.50px;">Nos</div>
<div class="t" style="top:1279.56px;font-size:28.87px;font-weight:normal;color:#383838;letter-spacing:0.010px;left:2351.51px;transform:translateX(-100%);"><span style="display:inline-block;width:18.7px;text-align:center;letter-spacing:0">3</span><span style="display:inline-block;width:18.7px;text-align:center;letter-spacing:0">5</span><span style="display:inline-block;width:18.7px;text-align:center;letter-spacing:0">0</span>.<span style="display:inline-block;width:18.7px;text-align:center;letter-spacing:0">0</span><span style="display:inline-block;width:18.7px;text-align:center;letter-spacing:0">0</span><span style="display:inline-block;width:18.7px;text-align:center;letter-spacing:0">0</span></div>
<div class="t" style="top:1351.56px;font-size:28.87px;font-weight:normal;color:#383838;left:148.50px;">5</div>
<div class="t" style="top:1345.56px;font-size:28.87px;font-weight:normal;color:#383838;letter-spacing:0.050px;left:203.50px;">MAT<span style="display:inline-block;width:18.7px;text-align:center;letter-spacing:0">-</span>MR<span style="display:inline-block;width:18.7px;text-align:center;letter-spacing:0">-</span><span style="display:inline-block;width:18.7px;text-align:center;letter-spacing:0">2</span><span style="display:inline-block;width:18.7px;text-align:center;letter-spacing:0">0</span><span style="display:inline-block;width:18.7px;text-align:center;letter-spacing:0">2</span><span style="display:inline-block;width:18.7px;text-align:center;letter-spacing:0">5</span><span style="display:inline-block;width:18.7px;text-align:center;letter-spacing:0">-</span><span style="letter-spacing:-1px">...</span></div>
<div class="t" style="top:1345.56px;font-size:28.87px;font-weight:normal;color:#383838;letter-spacing:0.300px;left:505.50px;"><span style="display:inline-block;width:18.7px;text-align:center;letter-spacing:0">2</span><span style="display:inline-block;width:18.7px;text-align:center;letter-spacing:0">9</span><span style="display:inline-block;width:18.7px;text-align:center;letter-spacing:0">-</span><span style="display:inline-block;width:18.7px;text-align:center;letter-spacing:0">0</span><span style="display:inline-block;width:18.7px;text-align:center;letter-spacing:0">1</span><span style="display:inline-block;width:18.7px;text-align:center;letter-spacing:0">-</span><span style="display:inline-block;width:18.7px;text-align:center;letter-spacing:0">2</span><span style="letter-spacing:-1px">...</span></div>
<div class="t" style="top:1345.56px;font-size:28.87px;font-weight:normal;color:#383838;letter-spacing:0.300px;left:687.50px;"><span style="display:inline-block;width:18.7px;text-align:center;letter-spacing:0">2</span><span style="display:inline-block;width:18.7px;text-align:center;letter-spacing:0">9</span><span style="display:inline-block;width:18.7px;text-align:center;letter-spacing:0">-</span><span style="display:inline-block;width:18.7px;text-align:center;letter-spacing:0">0</span><span style="display:inline-block;width:18.7px;text-align:center;letter-spacing:0">1</span><span style="display:inline-block;width:18.7px;text-align:center;letter-spacing:0">-</span><span style="display:inline-block;width:18.7px;text-align:center;letter-spacing:0">2</span><span style="display:inline-block;width:18.7px;text-align:center;letter-spacing:0">0</span><span style="letter-spacing:-1px">...</span></div>
<div class="t" style="top:1345.56px;font-size:28.87px;font-weight:normal;color:#383838;letter-spacing:0.300px;left:890.00px;">Raw Sulphur</div>
<div class="t" style="top:1345.56px;font-size:28.87px;font-weight:normal;color:#383838;letter-spacing:0.300px;left:1092.50px;">Raw Sulphur</div>
<div class="t" style="top:1345.56px;font-size:28.87px;font-weight:normal;color:#383838;letter-spacing:0.300px;left:1294.50px;">Raw Sulphur</div>
<div class="t" style="top:1345.56px;font-size:28.87px;font-weight:normal;color:#383838;letter-spacing:0.300px;left:1696.50px;">Litre</div>
<div class="t" style="top:1345.56px;font-size:28.87px;font-weight:normal;color:#383838;letter-spacing:0.300px;left:1897.50px;">Litre</div>
<div class="t" style="top:1345.56px;font-size:28.87px;font-weight:normal;color:#383838;letter-spacing:0.010px;left:2351.51px;transform:translateX(-100%);"><span style="display:inline-block;width:18.7px;text-align:center;letter-spacing:0">5</span><span style="display:inline-block;width:18.7px;text-align:center;letter-spacing:0">0</span><span style="display:inline-block;width:18.7px;text-align:center;letter-spacing:0">0</span>.<span style="display:inline-block;width:18.7px;text-align:center;letter-spacing:0">0</span><span style="display:inline-block;width:18.7px;text-align:center;letter-spacing:0">0</span><span style="display:inline-block;width:18.7px;text-align:center;letter-spacing:0">0</span></div>
</div>
<div class="a" style="left:0;top:0;width:2524px;height:1568px;overflow:hidden">
<div class="t" style="top:1081.56px;font-size:28.87px;font-weight:normal;color:#383838;letter-spacing:0.010px;left:2634.01px;transform:translateX(-100%);"><span style="display:inline-block;width:18.7px;text-align:center;letter-spacing:0">2</span><span style="display:inline-block;width:18.7px;text-align:center;letter-spacing:0">5</span><span style="display:inline-block;width:18.7px;text-align:center;letter-spacing:0">0</span>.<span style="display:inline-block;width:18.7px;text-align:center;letter-spacing:0">0</span><span style="display:inline-block;width:18.7px;text-align:center;letter-spacing:0">0</span><span style="display:inline-block;width:18.7px;text-align:center;letter-spacing:0">0</span></div>
<div class="t" style="top:1147.56px;font-size:28.87px;font-weight:normal;color:#383838;letter-spacing:0.010px;left:2634.01px;transform:translateX(-100%);"><span style="display:inline-block;width:18.7px;text-align:center;letter-spacing:0">3</span>,<span style="display:inline-block;width:18.7px;text-align:center;letter-spacing:0">0</span><span style="display:inline-block;width:18.7px;text-align:center;letter-spacing:0">0</span><span style="display:inline-block;width:18.7px;text-align:center;letter-spacing:0">0</span>.<span style="display:inline-block;width:18.7px;text-align:center;letter-spacing:0">0</span><span style="display:inline-block;width:18.7px;text-align:center;letter-spacing:0">0</span><span style="display:inline-block;width:18.7px;text-align:center;letter-spacing:0">0</span></div>
<div class="t" style="top:1213.56px;font-size:28.87px;font-weight:normal;color:#383838;letter-spacing:0.010px;left:2634.01px;transform:translateX(-100%);"><span style="display:inline-block;width:18.7px;text-align:center;letter-spacing:0">3</span><span style="display:inline-block;width:18.7px;text-align:center;letter-spacing:0">5</span><span style="display:inline-block;width:18.7px;text-align:center;letter-spacing:0">0</span>.<span style="display:inline-block;width:18.7px;text-align:center;letter-spacing:0">0</span><span style="display:inline-block;width:18.7px;text-align:center;letter-spacing:0">0</span><span style="display:inline-block;width:18.7px;text-align:center;letter-spacing:0">0</span></div>
<div class="t" style="top:1279.56px;font-size:28.87px;font-weight:normal;color:#383838;letter-spacing:0.010px;left:2634.01px;transform:translateX(-100%);"><span style="display:inline-block;width:18.7px;text-align:center;letter-spacing:0">3</span><span style="display:inline-block;width:18.7px;text-align:center;letter-spacing:0">5</span><span style="display:inline-block;width:18.7px;text-align:center;letter-spacing:0">0</span>.<span style="display:inline-block;width:18.7px;text-align:center;letter-spacing:0">0</span><span style="display:inline-block;width:18.7px;text-align:center;letter-spacing:0">0</span><span style="display:inline-block;width:18.7px;text-align:center;letter-spacing:0">0</span></div>
<div class="t" style="top:1345.56px;font-size:28.87px;font-weight:normal;color:#383838;letter-spacing:0.010px;left:2634.01px;transform:translateX(-100%);"><span style="display:inline-block;width:18.7px;text-align:center;letter-spacing:0">5</span><span style="display:inline-block;width:18.7px;text-align:center;letter-spacing:0">0</span><span style="display:inline-block;width:18.7px;text-align:center;letter-spacing:0">0</span>.<span style="display:inline-block;width:18.7px;text-align:center;letter-spacing:0">0</span><span style="display:inline-block;width:18.7px;text-align:center;letter-spacing:0">0</span><span style="display:inline-block;width:18.7px;text-align:center;letter-spacing:0">0</span></div>
</div>
<div class="bd" style="left:122px;top:1389px;width:2742px;height:2px"></div>
<div class="bd" style="left:122px;top:1389px;width:2px;height:66px"></div>
<div class="bd" style="left:188px;top:1389px;width:2px;height:66px"></div>
<div class="bd" style="left:490px;top:1389px;width:2px;height:66px"></div>
<div class="bd" style="left:672px;top:1389px;width:2px;height:66px"></div>
<div class="bd" style="left:874.5px;top:1389px;width:2px;height:66px"></div>
<div class="bd" style="left:1077px;top:1389px;width:2px;height:66px"></div>
<div class="bd" style="left:1279px;top:1389px;width:2px;height:66px"></div>
<div class="bd" style="left:1681px;top:1389px;width:2px;height:66px"></div>
<div class="bd" style="left:1882px;top:1389px;width:2px;height:66px"></div>
<div class="bd" style="left:2084.5px;top:1389px;width:2px;height:66px"></div>
<div class="bd" style="left:2366.5px;top:1389px;width:2px;height:66px"></div>
<div class="bd" style="left:2649px;top:1389px;width:2px;height:66px"></div>
<div class="bd" style="left:122px;top:1457px;width:2742px;height:2px"></div>
<div class="bd" style="left:94px;top:1459px;width:2794px;height:2px"></div>
<div class="t" style="top:1411.56px;font-size:28.87px;font-weight:bold;color:#333;letter-spacing:0.802px;left:205.00px;">Total</div>
<div class="t" style="top:1411.56px;font-size:28.87px;font-weight:bold;color:#333;letter-spacing:0.010px;left:2352.51px;transform:translateX(-100%);"><span style="display:inline-block;width:18.7px;text-align:center;letter-spacing:0">4</span>,<span style="display:inline-block;width:18.7px;text-align:center;letter-spacing:0">4</span><span style="display:inline-block;width:18.7px;text-align:center;letter-spacing:0">5</span><span style="display:inline-block;width:18.7px;text-align:center;letter-spacing:0">0</span>.<span style="display:inline-block;width:18.7px;text-align:center;letter-spacing:0">0</span><span style="display:inline-block;width:18.7px;text-align:center;letter-spacing:0">0</span><span style="display:inline-block;width:18.7px;text-align:center;letter-spacing:0">0</span></div>
<div class="t" style="top:1411.56px;font-size:28.87px;font-weight:bold;color:#333;letter-spacing:0.010px;left:2635.51px;transform:translateX(-100%);"><span style="display:inline-block;width:18.7px;text-align:center;letter-spacing:0">4</span>,<span style="display:inline-block;width:18.7px;text-align:center;letter-spacing:0">4</span><span style="display:inline-block;width:18.7px;text-align:center;letter-spacing:0">5</span><span style="display:inline-block;width:18.7px;text-align:center;letter-spacing:0">0</span>.<span style="display:inline-block;width:18.7px;text-align:center;letter-spacing:0">0</span><span style="display:inline-block;width:18.7px;text-align:center;letter-spacing:0">0</span><span style="display:inline-block;width:18.7px;text-align:center;letter-spacing:0">0</span></div>
<div class="a" style="left:0;top:0;width:2864px;height:1568px;overflow:hidden">
<div class="t" style="top:1411.56px;font-size:28.87px;font-weight:bold;color:#333;letter-spacing:0.010px;left:2875.01px;transform:translateX(-100%);"><span style="display:inline-block;width:18.7px;text-align:center;letter-spacing:0">0</span>.<span style="display:inline-block;width:18.7px;text-align:center;letter-spacing:0">0</span><span style="display:inline-block;width:18.7px;text-align:center;letter-spacing:0">0</span><span style="display:inline-block;width:18.7px;text-align:center;letter-spacing:0">0</span></div>
</div>
<div class="t" style="top:1481.85px;font-size:26.76px;font-weight:normal;color:#525252;letter-spacing:0.170px;left:125.00px;">For comparison, use &gt;5, &lt;10 or =324. For ranges, use 5:10 (for values between 5 &amp; 10).</div>
<div class="t" style="top:1481.85px;font-size:26.76px;font-weight:normal;color:#525252;letter-spacing:0.450px;left:2863.20px;transform:translateX(-100%);">Execution Time: 0.033255 sec</div>
</body></html>
